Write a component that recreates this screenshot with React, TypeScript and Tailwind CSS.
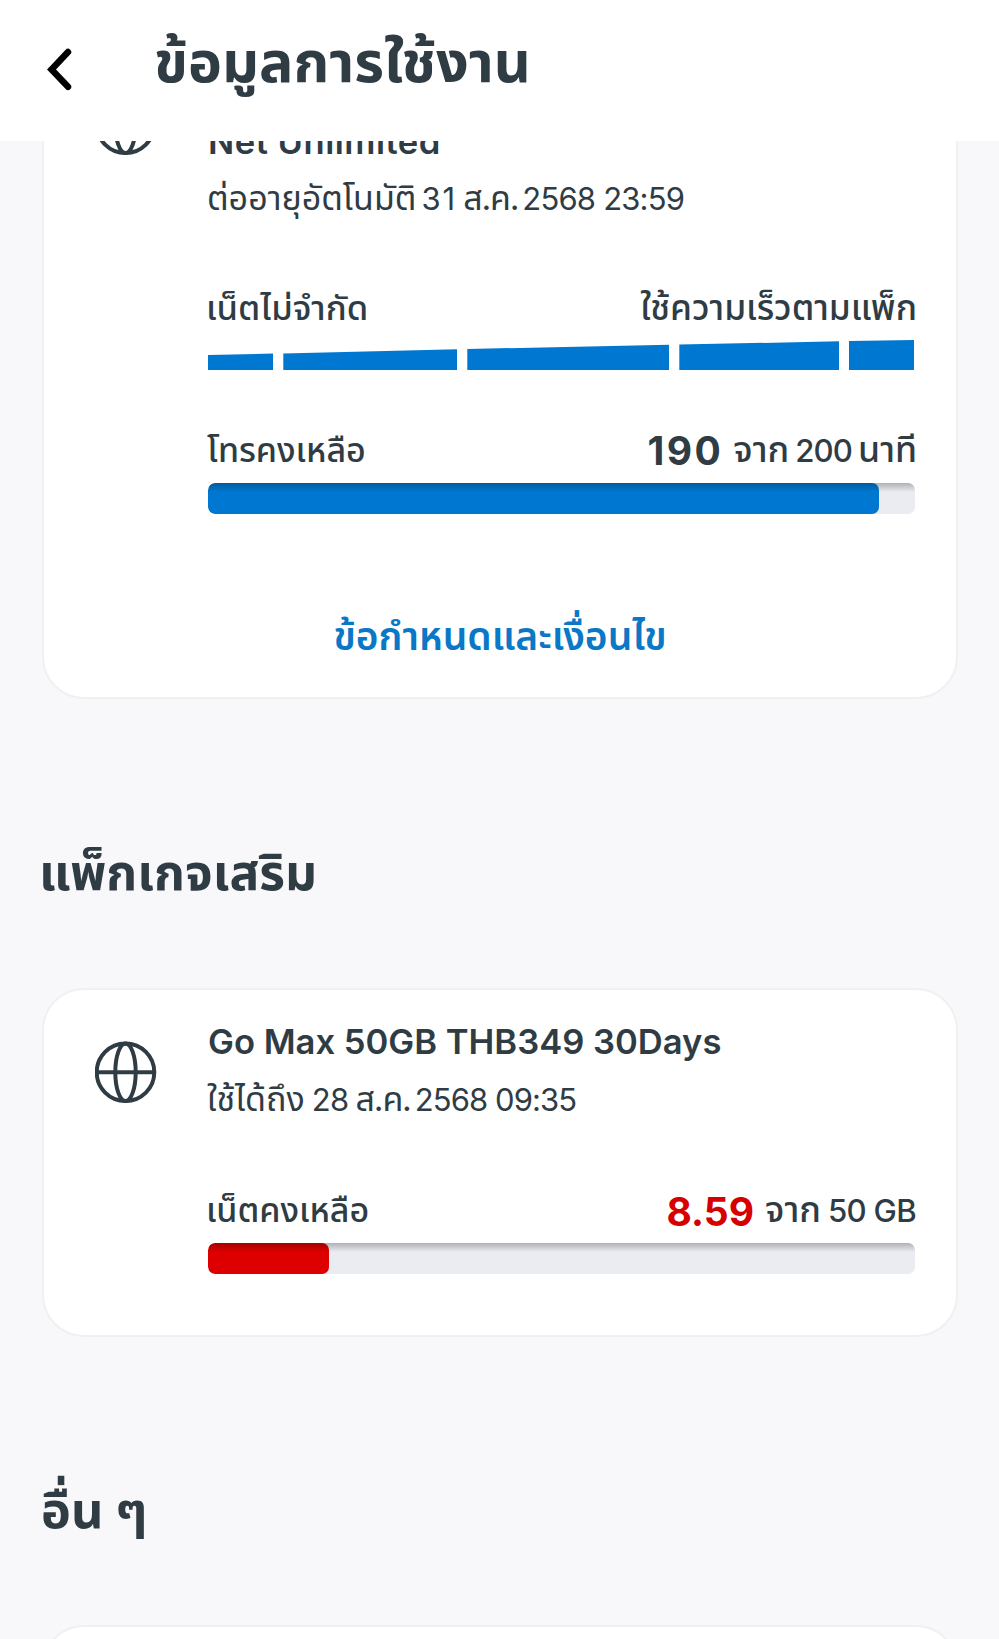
import type { ReactNode } from "react";

function Globe({ className }: { className: string }) {
  return (
    <svg viewBox="0 0 62 62" className={`size-[62px] shrink-0 ${className}`} fill="none" stroke="#303c44" strokeWidth="4">
      <circle cx="30.5" cy="31.2" r="28.800" />
      <ellipse cx="30.5" cy="31.2" rx="10.2" ry="28.800" />
      <path d="M2 31.2h57" />
    </svg>
  );
}

function Card({ className, children }: { className: string; children?: ReactNode }) {
  return (
    <section className={`mr-[41px] ml-[42px] shrink-0 rounded-[42px] border-[2.5px] border-[#f0f0f2] bg-white pt-[29px] ${className}`}>
      {children}
    </section>
  );
}

function PackageBody({ iconClass, children }: { iconClass: string; children: ReactNode }) {
  return (
    <div className="flex gap-[51px] pr-[41px] pl-[51px]">
      <Globe className={iconClass} />
      <div className="flex min-w-0 flex-1 flex-col">{children}</div>
    </div>
  );
}

function Meter({ children }: { children: ReactNode }) {
  return (
    <div className="relative mt-3 h-[31px] overflow-hidden rounded-[7px] bg-[#ebecf1]">
      {children}
      <div className="absolute inset-x-0 top-0 h-[9px] bg-linear-to-b from-black/25 to-transparent" />
    </div>
  );
}

function SpeedRamp() {
  return (
    <svg viewBox="0 0 706 30" className="mt-[11px] h-[30px] w-[706px]" fill="#0078d2">
      <path d="M0 15L65 13.6V30H0z" />
      <path d="M75.300 13.400L249 9.200V30H75.300z" />
      <path d="M259.300 9L461 4.800V30H259.300z" />
      <path d="M471.300 4.600L631 1.300V30H471.300z" />
      <path d="M641 1L706 0V30H641z" />
    </svg>
  );
}

export default function App() {
  return (
    <div className="flex h-[1639px] w-[999px] flex-col overflow-hidden bg-[#f8f8fb] font-[Inter,'Noto_Sans_Thai',sans-serif] whitespace-nowrap text-[#303c44]">
      <header className="flex h-[141px] shrink-0 bg-white pl-[43px]">
        <svg viewBox="0 0 32 48" className="mt-[46px] h-12 w-8" fill="none" stroke="#000" strokeWidth="6.500" strokeLinecap="round" strokeLinejoin="miter">
          <path d="M25 6L8.500 23.400L25 40.800" />
        </svg>
        <h1 className="ml-[79px] text-[57.4px] leading-[122px] font-bold">ข้อมูลการใช้งาน</h1>
      </header>

      <main className="flex min-h-0 flex-1 flex-col overflow-hidden">
        <Card className="-mt-[54px] h-[612px]">
          <PackageBody iconClass="-mt-[25px]">
            <h2 className="mt-px text-[34.6px] leading-[44px] font-semibold tracking-[0.5px]">Net Unlimited</h2>
            <p className="mt-[13px] flex items-baseline text-[31px] leading-[44px]">
              <span className="-ml-px text-[34px]">ต่ออายุอัตโนมัติ</span>
              <span className="ml-[5px] tracking-[2px]">31</span>
              <span className="ml-[6px] text-[34px] tracking-[-1.2px]">ส.ค.</span>
              <span className="ml-[4px] tracking-[-0.8px]">2568 23:59</span>
            </p>
            <div className="mt-[64px] flex items-baseline justify-between text-[34.600px] leading-[44px] font-medium">
              <span className="-ml-[2px]">เน็ตไม่จำกัด</span>
              <span className="-mr-[2px] text-[35.2px]">ใช้ความเร็วตามแพ็ก</span>
            </div>
            <SpeedRamp />
            <div className="mt-[57px] flex h-[44px] items-baseline text-[31.2px] leading-[44px] font-medium">
              <span className="mr-auto -ml-px text-[34px]">โทรคงเหลือ</span>
              <span className="translate-y-[3px] text-[39px] leading-[40px] font-bold tracking-[2.5px]">190</span>
              <span className="ml-[10px] text-[35.8px]">จาก</span>
              <span className="ml-[6px] tracking-[-0.9px]">200</span>
              <span className="-mr-[2px] ml-[6px] text-[35.6px]">นาที</span>
            </div>
            <Meter>
              <div className="h-full w-[671px] rounded-[7px] bg-[#0078d2]" />
            </Meter>
          </PackageBody>
          <a className="mt-[98px] block text-center text-[38.9px] leading-[48px] font-semibold text-[#0a78c6]">ข้อกำหนดและเงื่อนไข</a>
        </Card>

        <h2 className="mt-[143px] ml-[39px] shrink-0 text-[49.6px] leading-[60px] font-bold">แพ็กเกจเสริม</h2>

        <Card className="mt-[86px] h-[349px]">
          <PackageBody iconClass="mt-[22px]">
            <h3 className="text-[34.6px] leading-[44px] font-semibold">Go Max 50GB THB349 30Days</h3>
            <p className="mt-[14px] flex items-baseline text-[31px] leading-[44px]">
              <span className="-ml-px text-[34px]">ใช้ได้ถึง</span>
              <span className="ml-[7px] tracking-[-0.65px]">28</span>
              <span className="ml-[7px] text-[34px] tracking-[-1.2px]">ส.ค.</span>
              <span className="ml-[4px] tracking-[-0.9px]">2568 09:35</span>
            </p>
            <div className="mt-[65px] flex h-[44px] items-baseline text-[31.2px] leading-[44px] font-medium">
              <span className="mr-auto -ml-[2px] text-[34px]">เน็ตคงเหลือ</span>
              <span className="translate-y-[3.500px] text-[39px] leading-[40px] font-bold text-[#d70000]">8.59</span>
              <span className="ml-[11px] text-[35.8px]">จาก</span>
              <span className="-mr-px ml-[7px] tracking-[-0.7px]">50 GB</span>
            </div>
            <Meter>
              <div className="h-full w-[121px] rounded-[7px] bg-[#de0000]" />
            </Meter>
          </PackageBody>
        </Card>

        <h2 className="mt-[143px] ml-[41px] shrink-0 text-[50.4px] leading-[60px] font-bold">อื่น ๆ</h2>

        <Card className="mt-[85px] h-[349px]" />
      </main>
    </div>
  );
}
